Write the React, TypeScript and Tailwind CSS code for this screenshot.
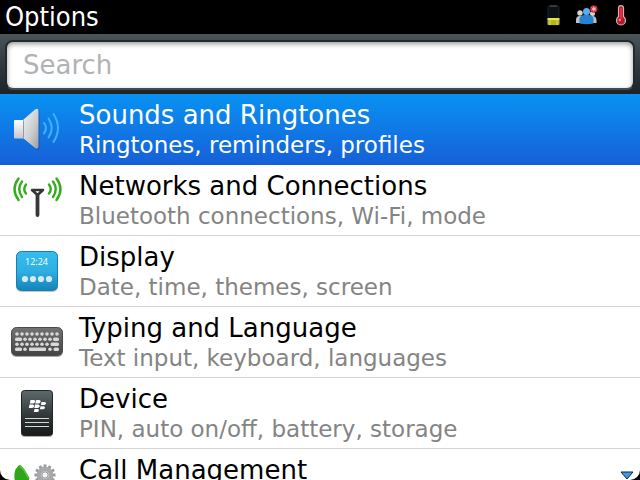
import type { ReactNode } from 'react';

interface Option {
  title: string;
  description?: string;
  icon: ReactNode;
  selected?: boolean;
}

function RowIcon({ children }: { children: ReactNode }) {
  return (
    <svg viewBox="0 0 74 70" className="w-[74px] h-[70px] shrink-0" aria-hidden="true">
      {children}
    </svg>
  );
}

function SoundIcon() {
  return (
    <RowIcon>
      <defs>
        <linearGradient id="cone" x1="0" y1="0" x2="1" y2="1">
          <stop offset="0" stopColor="#f4f4f4" />
          <stop offset="0.6" stopColor="#c9cbce" />
          <stop offset="1" stopColor="#9a9da5" />
        </linearGradient>
        <linearGradient id="magnet" x1="0" y1="0" x2="0" y2="1">
          <stop offset="0" stopColor="#ffffff" />
          <stop offset="1" stopColor="#c3c6cc" />
        </linearGradient>
      </defs>
      <path d="M24 27 L36 16 Q39.500 14.500 39.500 18 V53 Q39 57 36 55.500 L24 45Z" fill="#1c4a8c" opacity="0.6" />
      <path d="M23 26 L35 15.500 Q38.500 13.500 38.500 17 V52 Q38.500 56 35 54 L23 44Z" fill="url(#cone)" />
      <rect x="14" y="26" width="9.500" height="18.500" rx="1" fill="url(#magnet)" />
      <path d="M23.500 26.500V44" stroke="#9599a1" />
      <g fill="none" stroke="#3fb2f6" strokeWidth="2" strokeLinecap="round">
        <path d="M44 29 Q48 34 44 39.500" />
        <path d="M48.500 24.500 Q55 34 48.500 43.500" />
        <path d="M53.500 20 Q62.500 34 53.500 48" />
      </g>
    </RowIcon>
  );
}

function NetworkIcon() {
  return (
    <RowIcon>
      <g fill="none" stroke="#35ac1c" strokeWidth="2.400" strokeLinecap="round">
        <path d="M26 19.500 Q22.500 24 26 28.500" />
        <path d="M22 16.500 Q16.500 24 22 32" />
        <path d="M18.500 13.500 Q10.500 24 18.500 35" />
        <path d="M49 19.500 Q52.500 24 49 28.500" />
        <path d="M53 16.500 Q58.500 24 53 32" />
        <path d="M56.500 13.500 Q64.500 24 56.500 35" />
      </g>
      <path d="M32 25 H43 L37.500 30Z" fill="#fff" stroke="#333537" strokeWidth="2.600" strokeLinejoin="round" />
      <path d="M37.500 30V50" stroke="#35373a" strokeWidth="3.800" strokeLinecap="round" />
    </RowIcon>
  );
}

function DisplayIcon() {
  return (
    <RowIcon>
      <defs>
        <linearGradient id="screen" x1="0" y1="0" x2="0" y2="1">
          <stop offset="0" stopColor="#35bdf0" />
          <stop offset="0.500" stopColor="#2fafe2" />
          <stop offset="1" stopColor="#1683b7" />
        </linearGradient>
      </defs>
      <rect x="16" y="16" width="42" height="40" rx="5" fill="#8aa7b6" opacity="0.6" />
      <rect x="16.500" y="15.500" width="41" height="39" rx="5" fill="url(#screen)" stroke="#187eac" />
      <text x="36.500" y="29" textAnchor="middle" fontSize="9" fill="#ffffff" className="font-['Open_Sans',sans-serif]">12:24</text>
      <g fill="#d4eaf2">
        <circle cx="25" cy="43" r="3.100" />
        <circle cx="33" cy="43" r="3.100" />
        <circle cx="41" cy="43" r="3.100" />
        <circle cx="49" cy="43" r="3.100" />
      </g>
    </RowIcon>
  );
}

function KeyboardIcon() {
  const keys = [17, 22, 27, 32, 37, 42, 47, 52, 57];
  return (
    <RowIcon>
      <defs>
        <linearGradient id="board" x1="0" y1="0" x2="0" y2="1">
          <stop offset="0" stopColor="#737373" />
          <stop offset="1" stopColor="#434343" />
        </linearGradient>
      </defs>
      <rect x="11" y="21" width="52" height="29" rx="5" fill="#aaa" />
      <rect x="11.500" y="20.500" width="51" height="28" rx="5" fill="url(#board)" stroke="#4b4b4b" />
      <g fill="#d8d8d8">
        {keys.map((x) => (
          <circle key={x} cx={x} cy="27" r="1.800" />
        ))}
        <rect x="15" y="30.500" width="7" height="3.500" rx="1.500" />
        {keys.slice(2, 8).map((x) => (
          <circle key={x} cx={x - 2} cy="32.300" r="1.800" />
        ))}
        <rect x="53" y="30.500" width="6" height="3.500" rx="1.500" />
        {keys.slice(0, 7).map((x) => (
          <circle key={x} cx={x} cy="37.300" r="1.800" />
        ))}
        <rect x="50.500" y="35.500" width="8.500" height="3.500" rx="1.500" />
        <rect x="15" y="40.500" width="7" height="3.500" rx="1.500" />
        <circle cx="25" cy="42.300" r="1.800" />
        <rect x="29" y="40.500" width="17" height="3.500" rx="1" />
        <circle cx="50" cy="42.300" r="1.800" />
        <rect x="53.500" y="40.500" width="5.500" height="3.500" rx="1.500" />
      </g>
    </RowIcon>
  );
}

function DeviceIcon() {
  return (
    <RowIcon>
      <defs>
        <linearGradient id="device" x1="0" y1="0" x2="0" y2="1">
          <stop offset="0" stopColor="#5d696c" />
          <stop offset="0.600" stopColor="#2e3334" />
          <stop offset="1" stopColor="#181a1b" />
        </linearGradient>
      </defs>
      <rect x="21" y="13" width="32" height="46" rx="4" fill="#aaa" />
      <rect x="21.500" y="12.500" width="31" height="45" rx="3" fill="url(#device)" stroke="#202425" />
      <g fill="#fff">
        <path d="M30.500 22 h3.200 q1.700 0 1.400 1.700 q-.3 1.700-2 1.700h-3.300z" />
        <path d="M36 22 h3.200 q1.700 0 1.400 1.700 q-.3 1.700-2 1.700h-3.300z" />
        <path d="M29.500 26.500 h3.200 q1.700 0 1.400 1.700 q-.3 1.700-2 1.700h-3.300z" />
        <path d="M35 26.500 h3.200 q1.700 0 1.400 1.700 q-.3 1.700-2 1.700h-3.300z" />
        <path d="M41.500 24 h3 q1.700 0 1.400 1.500 q-.3 1.500-2 1.500h-3z" />
        <path d="M40.500 28.300 h3 q1.700 0 1.400 1.500 q-.3 1.500-2 1.500h-3z" />
        <path d="M34.500 31 h3 q1.700 0 1.400 1.500 q-.3 1.500-2 1.500h-3z" />
      </g>
      <path d="M25 40.500H49M25 44.500H49M25 48.500H49" stroke="#d5d9da" strokeWidth="1.200" />
    </RowIcon>
  );
}

function CallIcon() {
  const teeth = [0, 30, 60, 90, 120, 150, 180, 210, 240, 270, 300, 330];
  return (
    <RowIcon>
      <path d="M19 16 Q21 15.500 24 20 L29.500 29 L27 36 H16 Q13 27 15.500 20.500Z" fill="#2fa51a" />
      <path d="M19.500 16.500 L24 21 L28.500 29" fill="none" stroke="#5cc840" strokeWidth="1.500" />
      <g fill="#999b9c">
        {teeth.map((a) => (
          <rect key={a} x="43.500" y="15.500" width="3" height="5" transform={`rotate(${a} 45 26)`} />
        ))}
      </g>
      <circle cx="45" cy="26" r="6" fill="none" stroke="#a6a8a9" strokeWidth="4.500" />
      <circle cx="45" cy="26" r="3.200" fill="#f5f5f5" stroke="#8a8c8d" />
    </RowIcon>
  );
}

const options: Option[] = [
  { title: 'Sounds and Ringtones', description: 'Ringtones, reminders, profiles', icon: <SoundIcon />, selected: true },
  { title: 'Networks and Connections', description: 'Bluetooth connections, Wi-Fi, mode', icon: <NetworkIcon /> },
  { title: 'Display', description: 'Date, time, themes, screen', icon: <DisplayIcon /> },
  { title: 'Typing and Language', description: 'Text input, keyboard, languages', icon: <KeyboardIcon /> },
  { title: 'Device', description: 'PIN, auto on/off, battery, storage', icon: <DeviceIcon /> },
  { title: 'Call Management', icon: <CallIcon /> },
];

function StatusIcons() {
  return (
    <div className="flex items-center">
      {/* Battery */}
      <svg viewBox="0 0 14 24" className="w-[14px] h-6" aria-hidden="true">
        <rect x="1" y="1" width="11" height="19" rx="1" fill="#0d1114" stroke="#20282d" strokeWidth="0.800" />
        <path d="M3 1H10" stroke="#59636a" />
        <rect x="0.500" y="13" width="12" height="7" rx="1" fill="#b4b51c" />
        <rect x="0.500" y="13" width="12" height="2" rx="1" fill="#e4e65c" />
        <path d="M3 15V20M10 15V20" stroke="#dde04a" />
      </svg>
      {/* Group */}
      <svg viewBox="0 0 24 24" className="ml-[14px] w-6 h-6" aria-hidden="true">
        <circle cx="5" cy="8" r="2.700" fill="#d8d3d2" />
        <path d="M1 18V15Q1 11 5 11H8V18Z" fill="#bfc3c7" />
        <circle cx="17.500" cy="8.500" r="2.500" fill="#d8d3d2" />
        <path d="M21.500 18V15Q21 11 17.500 11H14.500V18Z" fill="#bfc3c7" />
        <path d="M4.500 18.500V13.500Q5 10 11.500 9.500Q18 10 18.500 13.500V18.500Q11.500 20 4.500 18.500Z" fill="#2583cf" />
        <circle cx="11.500" cy="6.500" r="3.500" fill="#58aeee" />
        <circle cx="18.800" cy="4" r="3.700" fill="#cf2430" />
        <path d="M18.800 1.500V6.500M16.600 2.800L21 5.200M16.600 5.200L21 2.800" stroke="#ffc9c9" />
      </svg>
      {/* Thermometer */}
      <svg viewBox="0 0 14 24" className="ml-[15px] w-[14px] h-6" aria-hidden="true">
        <path d="M4.500 3Q4.500 0.700 7 0.700Q9.500 0.700 9.500 3V11.500Q11.500 13 11.500 15.500A4.500 4.500 0 1 1 2.500 15.500Q2.500 13 4.500 11.500Z" fill="#b61825" stroke="#d6b4b6" strokeWidth="1.200" />
        <path d="M7 3V14" stroke="#e5303f" strokeWidth="2" />
        <circle cx="5.800" cy="15" r="1.200" fill="#f48991" />
      </svg>
    </div>
  );
}

export default function App() {
  return (
    <div className="h-screen bg-black font-['DejaVu_Sans',sans-serif]">
      <div className="relative flex flex-col h-full overflow-hidden rounded-b-[10px] bg-white">
        {/* Title bar */}
        <header className="flex items-center justify-between shrink-0 h-[34px] bg-black pl-[5px] pr-3">
          <h1 className="font-['DejaVu_Sans_Condensed','DejaVu_Sans',sans-serif] font-stretch-condensed text-[27px] leading-[34px] text-white">
            Options
          </h1>
          <StatusIcons />
        </header>

        {/* Search */}
        <div className="shrink-0 h-[60px] px-[5px] pt-1.5 pb-1 bg-linear-to-b from-[#4b5559] via-[#30393e] to-[#1c2429]">
          <input
            type="search"
            aria-label="Search"
            placeholder="Search"
            className="block w-full h-[50px] rounded-lg border-2 border-[#232a2e] border-b-[#424b50] bg-white px-4 text-[26px] text-black placeholder:text-[#b0b3b5] outline-none shadow-[inset_0_2px_5px_#999]"
          />
        </div>

        {/* Option list */}
        <ul className="flex-1 min-h-0 overflow-hidden">
          {options.map((option) => (
            <li key={option.title}>
              <a
                href="#"
                className={`flex h-[71px] border-b ${
                  option.selected
                    ? 'border-[#1560d4] bg-linear-to-b from-[#0892f2] to-[#1660d8] text-white'
                    : 'border-[#d4d4d4] text-black'
                }`}
              >
                {option.icon}
                <div className="min-w-0 pl-[5px] pt-1.5 whitespace-nowrap">
                  <h2 className="text-[26px] leading-[30px]">{option.title}</h2>
                  {option.description && (
                    <p className={`text-[23px] leading-[30px] ${option.selected ? 'text-white' : 'text-[#848484]'}`}>
                      {option.description}
                    </p>
                  )}
                </div>
              </a>
            </li>
          ))}
        </ul>

        {/* More below */}
        <svg viewBox="0 0 14 9" className="absolute bottom-0 right-[6px] w-[14px] h-[9px]" aria-hidden="true">
          <path d="M1 1H13L7 8Z" fill="#3b9be6" stroke="#14263a" />
        </svg>
      </div>
    </div>
  );
}
